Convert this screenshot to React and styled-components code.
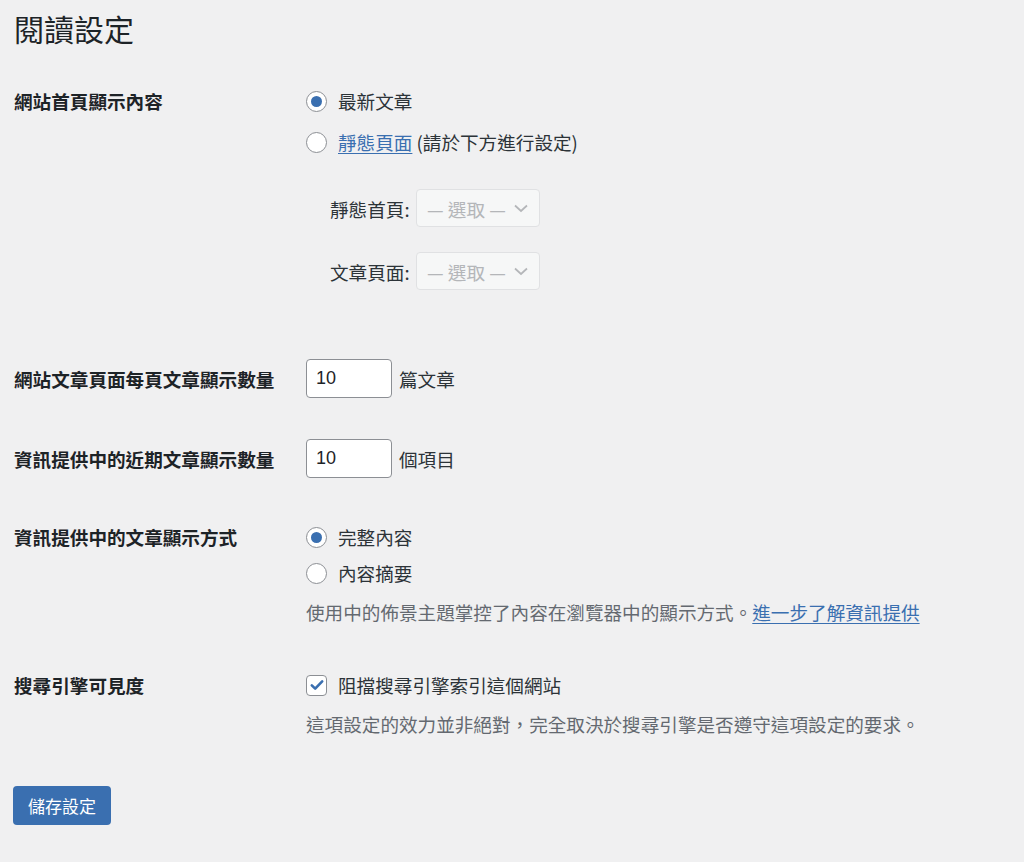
import React from 'react';
import styled, { createGlobalStyle } from 'styled-components';

const GlobalStyle = createGlobalStyle`
  html, body {
    margin: 0;
    padding: 0;
    background: #f0f0f1;
  }
  body {
    font-family: "Noto Sans CJK TC", "Noto Sans", sans-serif;
    color: #3c434a;
    font-size: 18.6px;
  }
`;

const frontOptions = [
  { id: 'posts', label: '最新文章', checked: true },
  { id: 'page', label: '靜態頁面', link: true, note: ' (請於下方進行設定)' },
];

const feedOptions = [
  { id: 'full', label: '完整內容', checked: true },
  { id: 'summary', label: '內容摘要' },
];

const App = () => {
  return (
    <Wrap>
      <GlobalStyle />
      <Heading>閱讀設定</Heading>

      <Row $top={40}>
        <Label>網站首頁顯示內容</Label>
        <Cell>
          <ChoiceList $gap={15}>
            {frontOptions.map((o) => (
              <Choice key={o.id}>
                <Radio $checked={o.checked} />
                {o.link ? (
                  <span>
                    <Link href="#">{o.label}</Link>
                    {o.note}
                  </span>
                ) : (
                  o.label
                )}
              </Choice>
            ))}
          </ChoiceList>
          <PageSelects>
            <SelectRow>
              <SelectLabel>靜態首頁:</SelectLabel>
              <Select>
                — 選取 —<Chevron />
              </Select>
            </SelectRow>
            <SelectRow>
              <SelectLabel>文章頁面:</SelectLabel>
              <Select>
                — 選取 —<Chevron />
              </Select>
            </SelectRow>
          </PageSelects>
        </Cell>
      </Row>

      <Row $top={69} $center>
        <Label>網站文章頁面每頁文章顯示數量</Label>
        <Cell>
          <InputLine>
            <NumberBox>10</NumberBox>
            篇文章
          </InputLine>
        </Cell>
      </Row>

      <Row $top={41} $center>
        <Label>資訊提供中的近期文章顯示數量</Label>
        <Cell>
          <InputLine>
            <NumberBox>10</NumberBox>
            個項目
          </InputLine>
        </Cell>
      </Row>

      <Row $top={46}>
        <Label>資訊提供中的文章顯示方式</Label>
        <Cell>
          <ChoiceList $gap={10}>
            {feedOptions.map((o) => (
              <Choice key={o.id}>
                <Radio $checked={o.checked} />
                {o.label}
              </Choice>
            ))}
          </ChoiceList>
          <Description>
            使用中的佈景主題掌控了內容在瀏覽器中的顯示方式。
            <Link href="#">進一步了解資訊提供</Link>
          </Description>
        </Cell>
      </Row>

      <Row $top={47}>
        <Label>搜尋引擎可見度</Label>
        <Cell>
          <Choice>
            <Checkbox>
              <svg width="16" height="16" viewBox="0 0 16 16">
                <path
                  d="M2.8 8.3l3.4 3.4L13.2 4.4"
                  fill="none"
                  stroke="#3a6fb0"
                  strokeWidth="2.6"
                  strokeLinecap="round"
                  strokeLinejoin="round"
                />
              </svg>
            </Checkbox>
            阻擋搜尋引擎索引這個網站
          </Choice>
          <Description>這項設定的效力並非絕對，完全取決於搜尋引擎是否遵守這項設定的要求。</Description>
        </Cell>
      </Row>

      <SaveButton>儲存設定</SaveButton>
    </Wrap>
  );
};

export default App;

const Chevron = () => (
  <svg width="16" height="16" viewBox="0 0 16 16" style={{ marginLeft: 7 }}>
    <path d="M2 5.5l6 5.5 6-5.5" fill="none" stroke="#b4b6b9" strokeWidth="1.7" />
  </svg>
);

const Wrap = styled.div`
  padding: 9px 13px 30px;
`;

const Heading = styled.h1`
  margin: 0;
  padding-left: 1px;
  font-size: 30px;
  line-height: 39px;
  font-weight: 400;
  color: #1d2327;
`;

const Row = styled.div`
  display: grid;
  grid-template-columns: 293px 1fr;
  align-items: ${(p) => (p.$center ? 'center' : 'start')};
  margin-top: ${(p) => p.$top}px;
`;

const Label = styled.div`
  padding-left: 1px;
  font-size: 18.6px;
  line-height: 26px;
  font-weight: 700;
  color: #1d2327;
`;

const Cell = styled.div`
  display: flex;
  flex-direction: column;
`;

const ChoiceList = styled.div`
  display: flex;
  flex-direction: column;
  gap: ${(p) => p.$gap}px;
`;

const Choice = styled.label`
  display: flex;
  align-items: center;
  height: 26px;
  line-height: 26px;
  color: #2c3338;
`;

const Radio = styled.span`
  box-sizing: border-box;
  width: 21px;
  height: 21px;
  border-radius: 50%;
  border: 1px solid #8c8f94;
  background: #fff;
  margin-right: 11px;
  flex-shrink: 0;
  display: flex;
  align-items: center;
  justify-content: center;

  &::after {
    content: '';
    display: ${(p) => (p.$checked ? 'block' : 'none')};
    width: 11px;
    height: 11px;
    border-radius: 50%;
    background: #3a6fb0;
  }
`;

const Checkbox = styled.span`
  box-sizing: border-box;
  width: 21px;
  height: 21px;
  border-radius: 4px;
  border: 1px solid #8c8f94;
  background: #fff;
  margin-right: 11px;
  display: flex;
  align-items: center;
  justify-content: center;
`;

const Link = styled.a`
  color: #3a6fb0;
  text-decoration: underline;
  text-underline-offset: 3px;
`;

const PageSelects = styled.div`
  display: flex;
  flex-direction: column;
  gap: 25px;
  margin-top: 34px;
  padding-left: 24px;
`;

const SelectRow = styled.div`
  display: flex;
  align-items: center;
  gap: 6px;
`;

const SelectLabel = styled.span`
  width: 80px;
  color: #2c3338;
`;

const Select = styled.div`
  box-sizing: border-box;
  width: 124px;
  height: 38px;
  padding: 0 10px;
  display: flex;
  align-items: center;
  border: 1px solid #e0e1e3;
  border-radius: 4px;
  background: #f6f7f7;
  color: #b4b6b9;
  font-size: 18.6px;
  white-space: nowrap;
`;

const InputLine = styled.div`
  display: flex;
  align-items: center;
  gap: 7px;
  color: #2c3338;
`;

const NumberBox = styled.div`
  box-sizing: border-box;
  width: 86px;
  height: 39px;
  padding: 0 9px;
  display: flex;
  align-items: center;
  border: 1px solid #8c8f94;
  border-radius: 4px;
  background: #fff;
  color: #1d2327;
  font-family: "Liberation Sans", "Noto Sans", sans-serif;
  font-size: 18px;
`;

const Description = styled.p`
  margin: 13px 0 0;
  line-height: 26px;
  color: #646970;
`;

const SaveButton = styled.button`
  margin-top: 49px;
  height: 39px;
  padding: 0 15px;
  border: none;
  border-radius: 4px;
  background: #3a6fb0;
  color: #fff;
  font-family: "Noto Sans CJK TC", sans-serif;
  font-size: 17px;
  cursor: pointer;
`;
